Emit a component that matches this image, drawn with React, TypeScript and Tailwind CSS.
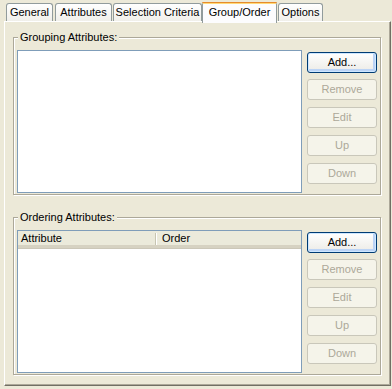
import React from "react";

const font = { fontFamily: '"Liberation Sans", Arial, sans-serif' };

function Tab({ label, w, ml, selected }: { label: string; w: string; ml: string; selected?: boolean }) {
  if (selected) {
    return (
      <div
        className={`relative z-10 ${w} ${ml} h-[21px] mb-[-2px] rounded-t-[3px] border-x border-[#919B9C] bg-[#FCFCFE] flex flex-col`}
      >
        <div className="h-[1px] bg-[#E68B2C] rounded-t-[3px] mx-[-1px]" />
        <div className="h-[1px] bg-[#FFC73C]" />
        <div className="h-[1px] bg-[#FFD978]" />
        <div className="flex-1 flex items-center justify-center text-[11px] text-black pb-[3px]">{label}</div>
      </div>
    );
  }
  return (
    <div
      className={`${w} ${ml} h-[18px] rounded-t-[3px] border border-b-0 border-[#919B9C] bg-gradient-to-b from-[#FFFFFF] to-[#F0EFEA] flex items-center justify-center text-[11px] text-black`}
    >
      {label}
    </div>
  );
}

function Btn({ label, primary, mt }: { label: string; primary?: boolean; mt: string }) {
  if (primary) {
    return (
      <div
        className={`${mt} w-[70px] h-[21px] rounded-[3px] border border-[#003C74] bg-gradient-to-b from-[#FFFFFF] to-[#ECEBE6] shadow-[inset_0_0_0_1px_#CEE7FF,inset_-1px_-1px_0_2px_#BCD4F6] flex items-center justify-center text-[11px] text-black`}
      >
        {label}
      </div>
    );
  }
  return (
    <div
      className={`${mt} w-[70px] h-[21px] rounded-[3px] border border-[#C9C7BA] bg-[#F5F4EA] flex items-center justify-center text-[11px] text-[#ACA899]`}
    >
      {label}
    </div>
  );
}

function Buttons() {
  return (
    <div className="ml-[5px] pt-[2px] flex flex-col">
      <Btn label="Add..." primary mt="mt-0" />
      <Btn label="Remove" mt="mt-[6px]" />
      <Btn label="Edit" mt="mt-[7px]" />
      <Btn label="Up" mt="mt-[7px]" />
      <Btn label="Down" mt="mt-[7px]" />
    </div>
  );
}

function GroupBox({ label, mt, children }: { label: string; mt: string; children: React.ReactNode }) {
  return (
    <div
      className={`relative ${mt} ml-[8px] w-[368px] h-[158px] border border-[#ACA899] shadow-[inset_1px_1px_0_#FFFFFF,1px_1px_0_#FFFFFF] pt-[12px] pl-[3px] flex`}
    >
      <div className="absolute left-[4px] top-[-7px] px-[2px] bg-[#ECE9D8] text-[11px] leading-[13px] text-black">
        {label}
      </div>
      {children}
    </div>
  );
}

export default function App() {
  return (
    <div className="w-[392px] h-[389px] bg-[#ECE9D8] overflow-hidden" style={font}>
      <div className="h-[21px] flex items-end pl-[6px]">
        <Tab label="General" w="w-[47px]" ml="ml-0" />
        <Tab label="Attributes" w="w-[57px]" ml="ml-[2px]" />
        <Tab label="Selection Criteria" w="w-[89px]" ml="ml-[1px]" />
        <Tab label="Group/Order" w="w-[75px]" ml="ml-0" selected />
        <Tab label="Options" w="w-[45px]" ml="ml-[1px]" />
      </div>
      <div className="ml-[4px] w-[387px] h-[365px] border-l border-t border-white border-r border-b border-r-[#716F64] border-b-[#716F64] shadow-[inset_-1px_-1px_0_#ACA899] flex flex-col">
        <GroupBox label="Grouping Attributes:" mt="mt-[15px]">
          <div className="w-[285px] h-[143px] border border-[#7F9DB9] bg-white" />
          <Buttons />
        </GroupBox>
        <GroupBox label="Ordering Attributes:" mt="mt-[22px]">
          <div className="w-[285px] h-[143px] border border-[#7F9DB9] bg-white flex flex-col">
            <div className="h-[17px] bg-[#EBEADB] border-b-[3px] border-[#D6D2C2] shadow-[0_1px_0_#CBC7B8] flex items-center text-[11px] text-black">
              <div className="w-[139px] pl-[3px] flex items-center justify-between h-full">
                <span>Attribute</span>
                <div className="flex h-[12px] mt-[1px]">
                  <div className="w-[1px] bg-[#C7C5B2]" />
                  <div className="w-[1px] bg-white" />
                </div>
              </div>
              <div className="pl-[5px]">Order</div>
            </div>
          </div>
          <Buttons />
        </GroupBox>
      </div>
    </div>
  );
}
